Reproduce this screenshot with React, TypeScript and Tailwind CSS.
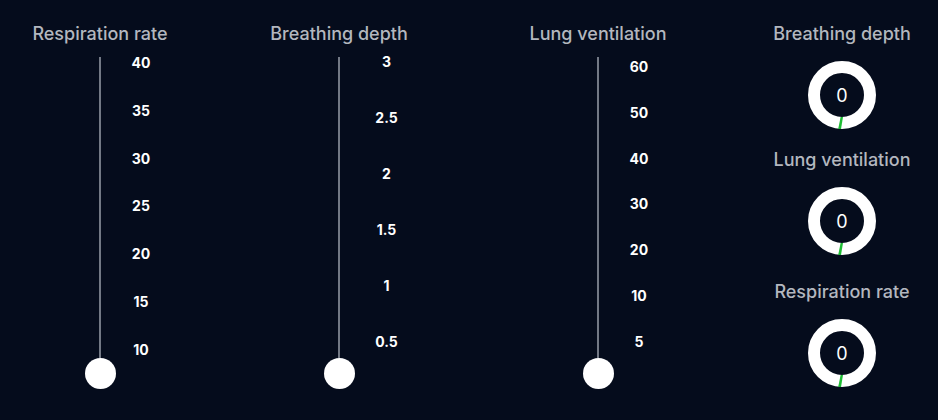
import React from "react";

interface SliderProps {
  title: string;
  labels: string[];
  // width of the label column, label center sits at track center + 15.5 + width / 2
  labelBoxW: string;
  labelBoxPos: string;
}

const Slider: React.FC<SliderProps> = ({ title, labels, labelBoxW, labelBoxPos }) => {
  return (
    <div className="flex flex-col items-center w-[200px] shrink-0">
      <h3 className="mt-[22px] h-6 leading-6 text-[18px] font-medium text-[#b3b7bf] whitespace-nowrap">
        {title}
      </h3>
      <div className="flex">
        {/* spacer keeps the track centered under the title */}
        <div className={labelBoxW} />
        <div className="flex flex-col items-center w-[31px]">
          <div className="mt-[11px] h-[301px] w-[2px] bg-[#737985]" />
          <div className="w-[31px] h-[31px] rounded-full bg-white" />
        </div>
        <div className={`${labelBoxW} ${labelBoxPos} flex flex-col items-center justify-between`}>
          {labels.map((l) => (
            <span key={l} className="text-[14px] leading-4 font-bold text-white">
              {l}
            </span>
          ))}
        </div>
      </div>
    </div>
  );
};

const Gauge: React.FC<{ title: string; className?: string }> = ({ title, className }) => {
  return (
    <div className={`flex flex-col items-center ${className ?? ""}`}>
      <h3 className="h-6 leading-6 text-[18px] font-medium text-[#b3b7bf] whitespace-nowrap">{title}</h3>
      <div className="relative mt-[15px] w-[68px] h-[68px]">
        <svg width="68" height="68" viewBox="0 0 68 68" className="absolute inset-0">
          <circle cx="34" cy="34" r="28" fill="none" stroke="#ffffff" strokeWidth="12" />
          <polygon points="32.6,56 35,56 33,68 30.2,68" fill="#1fbd35" />
        </svg>
        <span className="absolute inset-0 flex items-center justify-center text-[18px] text-white">0</span>
      </div>
    </div>
  );
};

export default function App() {
  return (
    <div
      className="w-[938px] h-[420px] bg-[#050c1c] flex overflow-hidden"
      style={{ fontFamily: "Inter, 'Noto Sans', sans-serif" }}
    >
      <Slider
        title="Respiration rate"
        labels={["40", "35", "30", "25", "20", "15", "10"]}
        labelBoxW="w-[51px]"
        labelBoxPos="mt-[9px] h-[303px]"
      />
      <div className="ml-[39px] shrink-0">
        <Slider
          title="Breathing depth"
          labels={["3", "2.5", "2", "1.5", "1", "0.5"]}
          labelBoxW="w-[64px]"
          labelBoxPos="mt-[8px] h-[296px]"
        />
      </div>
      <div className="ml-[59px] shrink-0">
        <Slider
          title="Lung ventilation"
          labels={["60", "50", "40", "30", "20", "10", "5"]}
          labelBoxW="w-[51px]"
          labelBoxPos="mt-[13px] h-[291px]"
        />
      </div>
      <div className="ml-[54px] w-[180px] shrink-0 flex flex-col items-center pt-[22px]">
        <Gauge title="Breathing depth" />
        <Gauge title="Lung ventilation" className="mt-[19px]" />
        <Gauge title="Respiration rate" className="mt-[25px]" />
      </div>
    </div>
  );
}
